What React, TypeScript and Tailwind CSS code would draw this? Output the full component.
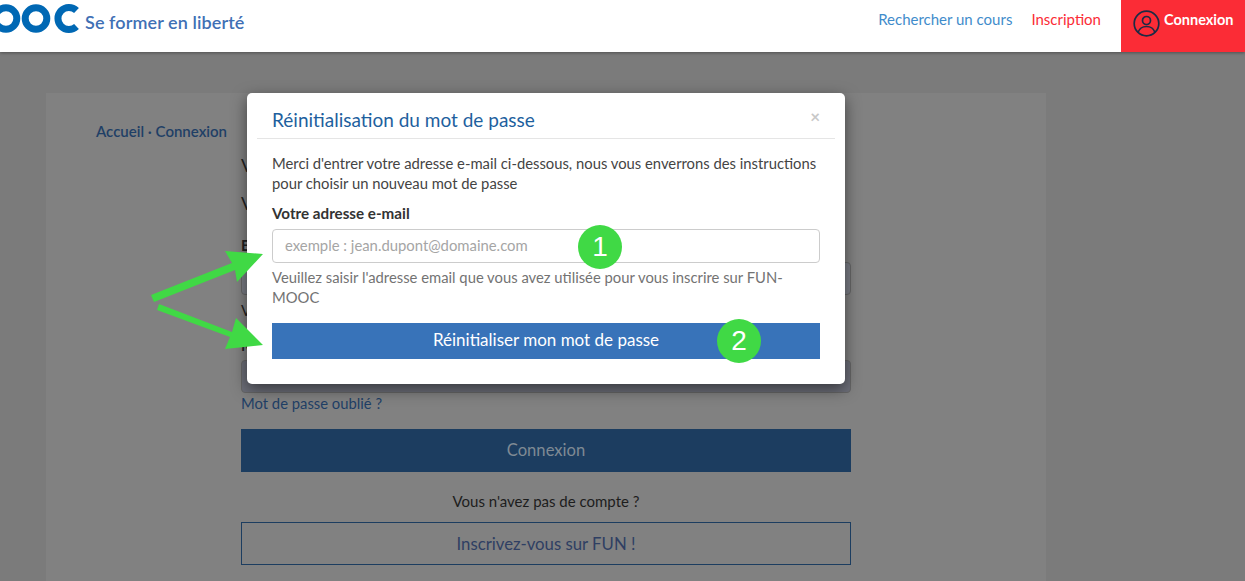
export default function App() {
  return (
    <div className="relative h-[581px] w-[1245px] overflow-hidden bg-[#7b7b7b] font-['Lato','Liberation_Sans',sans-serif]">
      <header className="relative z-20 flex h-[52px] items-stretch bg-white shadow-[0_1px_3px_rgba(0,0,0,0.35)]">
        <div className="flex items-start">
          <svg width="80" height="38" viewBox="0 0 80 38" className="shrink-0" fill="none" stroke="#0068b4" strokeWidth="7">
            <circle cx="6" cy="18.500" r="10.800" />
            <circle cx="36" cy="18.500" r="10.800" />
            <path d="M76.500 10.500 A11 11 0 1 0 76.500 26.500" />
          </svg>
          <span className="ml-[5px] mt-[12px] text-[18px] font-semibold leading-5 tracking-[0.1px] text-[#3f70b5]">Se former en liberté</span>
        </div>
        <nav className="ml-auto flex items-start">
          <a className="mt-[9px] text-[15px] leading-5 text-[#3f8ccb]">Rechercher un cours</a>
          <a className="ml-[19px] mt-[9px] text-[15px] leading-5 text-[#fb2c36]">Inscription</a>
          <a className="ml-[20px] flex h-[52px] w-[124px] items-start bg-[#fb2c36] pl-[12px] pt-[10px]">
            <svg width="28" height="28" viewBox="0 0 28 28" fill="none" stroke="#1c2b45" strokeWidth="1.700">
              <circle cx="13.500" cy="13.500" r="12.300" />
              <circle cx="13.500" cy="10.500" r="4" />
              <path d="M5 22.500c1.500-4.500 5-6 8.500-6s7 1.500 8.500 6" />
            </svg>
            <span className="ml-[3px] text-[14.500px] font-bold leading-5 text-white">Connexion</span>
          </a>
        </nav>
      </header>

      <main className="ml-[46px] mt-[41px] h-[488px] w-[1000px] bg-[#818181] pl-[50px] pt-[28px]">
        <div className="text-[15px] font-semibold leading-5 text-[#1f3f66]">Accueil · Connexion</div>
        <div className="ml-[145px] mt-[12px] w-[610px] text-[15px] text-[#222]">
          <p className="text-[18px] leading-6">Vous avez déjà un compte ?</p>
          <p className="mt-[14px] text-[18px] leading-6">Veuillez vous connecter</p>
          <p className="mt-[20px] font-bold leading-5">E-mail</p>
          <div className="mt-[7px] h-[33px] rounded-[4px] border border-[#666] bg-[#7a7d85]" />
          <p className="mt-[5px] leading-5">Veuillez saisir votre adresse</p>
          <p className="mt-[15px] font-bold leading-5">Mot de passe</p>
          <div className="mt-[5px] h-[33px] rounded-[4px] border border-[#666] bg-[#6c6e78]" />
          <a className="block text-[14.800px] leading-5 text-[#1f3f66]">Mot de passe oublié ?</a>
          <button className="mt-[16px] block h-[43px] w-full bg-[#1c3d60] text-[16.600px] text-[#7f8a94]">Connexion</button>
          <p className="mt-[19px] text-center leading-5 text-[#1d1d1d]">Vous n'avez pas de compte ?</p>
          <button className="mt-[11px] block h-[43px] w-full border border-[#1c3d60] text-[16.750px] text-[#2f3f63]">Inscrivez-vous sur FUN !</button>
        </div>
      </main>

      <div className="absolute left-[247px] top-[93px] z-30 h-[291px] w-[598px] rounded-[5px] bg-white px-[10px] shadow-[0_5px_15px_rgba(0,0,0,0.5)]">
        <div className="flex h-[46px] items-start border-b border-[#e5e5e5] px-[15px] pt-[15px]">
          <h2 className="text-[19px] leading-6 text-[#1e5f9e]">Réinitialisation du mot de passe</h2>
          <span className="ml-auto mt-[-1px] text-[17px] font-bold leading-5 text-[#c8c8c8]">×</span>
        </div>
        <div className="px-[15px] pt-[14px]">
          <p className="text-[14.800px] leading-5 text-[#444]">Merci d'entrer votre adresse e-mail ci-dessous, nous vous enverrons des instructions<br />pour choisir un nouveau mot de passe</p>
          <label className="mt-[10px] block text-[15.200px] font-bold leading-5 text-[#333]">Votre adresse e-mail</label>
          <div className="mt-[6px] flex h-[34px] w-[548px] items-center rounded-[4px] border border-[#ccc] px-[12px] pb-[1px] text-[14.850px] text-[#a5a5a5]">exemple : jean.dupont@domaine.com</div>
          <p className="mt-[4px] w-[548px] text-[14.800px] leading-5 text-[#737373]">Veuillez saisir l'adresse email que vous avez utilisée pour vous inscrire sur FUN-MOOC</p>
          <button className="mt-[16px] block h-[36px] w-[548px] bg-[#3873b9] pb-[2px] text-[17px] text-white">Réinitialiser mon mot de passe</button>
        </div>
      </div>

      <svg className="absolute left-0 top-0 z-40" width="300" height="400" viewBox="0 0 300 400" fill="#40d945">
        <polygon points="151,295 232,263 225,251 263,254 237,282 235,270 154,302" />
        <polygon points="159,304 232,332 236,318 263,345 225,349 230,337 157,310" />
      </svg>
      <div className="absolute left-[578px] top-[225px] z-40 flex h-[44px] w-[44px] items-center justify-center rounded-full bg-[#40d945] font-['Liberation_Sans',sans-serif] text-[28px] text-white">1</div>
      <div className="absolute left-[717px] top-[319px] z-40 flex h-[44px] w-[44px] items-center justify-center rounded-full bg-[#40d945] font-['Liberation_Sans',sans-serif] text-[28px] text-white">2</div>
    </div>
  );
}
